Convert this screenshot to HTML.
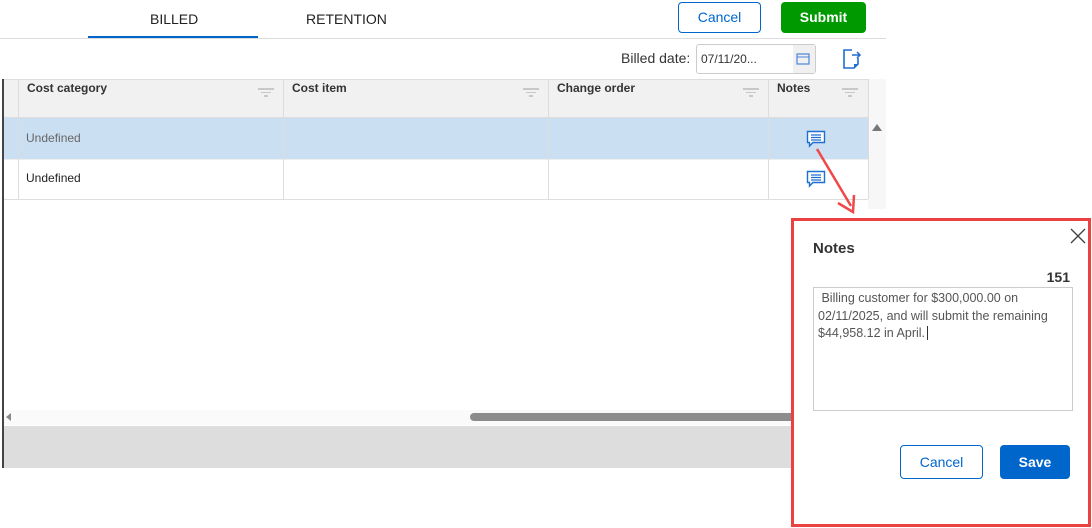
<!DOCTYPE html>
<html><head><style>
*{box-sizing:border-box;margin:0;padding:0}
body{width:1092px;height:528px;background:#fff;font-family:"Liberation Sans",Arial,sans-serif;position:relative;overflow:hidden;color:#333}
.a{position:absolute}
.btn{position:absolute;border-radius:4px;font-size:14px;text-align:center}
.th{position:absolute;top:79px;height:39px;font-size:12px;font-weight:bold;color:#333;padding:2px 8px}
.flt{position:absolute;top:86px;width:16px}
.flt i{display:block;height:1.5px;background:#c8c8c8;margin:2px auto}
</style></head><body>
<div class="a" style="left:150px;top:11px;font-size:14px;color:#222">BILLED</div>
<div class="a" style="left:306px;top:11px;font-size:14px;color:#222">RETENTION</div>
<div class="a" style="left:88px;top:36px;width:170px;height:2px;background:#0066cc"></div>
<div class="a" style="left:0;top:38px;width:886px;height:1px;background:#ddd"></div>
<div class="btn" style="left:678px;top:2px;width:83px;height:31px;border:1px solid #0066cc;color:#0066cc;line-height:29px">Cancel</div>
<div class="btn" style="left:781px;top:2px;width:85px;height:31px;background:#009a00;color:#fff;font-weight:bold;line-height:31px">Submit</div>
<div class="a" style="left:621px;top:50px;font-size:14px;color:#333">Billed date:</div>
<div class="a" style="left:696px;top:44px;width:120px;height:30px;border:1px solid #ccc;border-radius:3px;font-size:12px;padding:7px 4px;color:#333">07/11/20...<div class="a" style="right:0;top:0;width:22px;height:28px;background:#f0f0f0"></div>
<svg class="a" style="left:99px;top:8px" width="14" height="12"><rect x="1" y="1" width="12" height="10" fill="none" stroke="#4a86d8" stroke-width="1.2"/><line x1="1" y1="4" x2="13" y2="4" stroke="#4a86d8"/></svg></div>
<svg class="a" style="left:842px;top:48px" width="20" height="22"><path d="M10 2H2v18h10l4-4V10" fill="none" stroke="#1e6fd0" stroke-width="1.6"/><path d="M12 20l4-4h-4z" fill="#1e6fd0"/><path d="M10 7h8M15 4l3 3-3 3" fill="none" stroke="#1e6fd0" stroke-width="1.5"/></svg>
<div class="a" style="left:2px;top:79px;width:2px;height:389px;background:#444"></div>
<div class="a" style="left:4px;top:79px;width:864px;height:39px;background:#f1f1f1;border-top:1px solid #ddd;border-bottom:1px solid #ddd"></div>
<div class="a" style="left:868px;top:79px;width:18px;height:130px;background:#f7f7f7"></div>
<div class="a" style="left:4px;top:118px;width:864px;height:41px;background:#cbdff3"></div>
<div class="a" style="left:4px;top:199px;width:864px;height:1px;background:#ddd"></div>
<div class="a" style="left:4px;top:159px;width:864px;height:1px;background:#eee"></div>
<div class="a" style="left:18px;top:79px;width:1px;height:120px;background:#ddd"></div>
<div class="a" style="left:283px;top:79px;width:1px;height:120px;background:#ddd"></div>
<div class="a" style="left:548px;top:79px;width:1px;height:120px;background:#ddd"></div>
<div class="a" style="left:768px;top:79px;width:1px;height:120px;background:#ddd"></div>
<div class="a" style="left:868px;top:79px;width:1px;height:120px;background:#ddd"></div>
<div class="th" style="left:19px">Cost category</div>
<div class="th" style="left:284px">Cost item</div>
<div class="th" style="left:549px">Change order</div>
<div class="th" style="left:769px">Notes</div>
<div class="flt" style="left:258px"><i style="width:16px"></i><i style="width:10px"></i><i style="width:4px"></i></div>
<div class="flt" style="left:523px"><i style="width:16px"></i><i style="width:10px"></i><i style="width:4px"></i></div>
<div class="flt" style="left:743px"><i style="width:16px"></i><i style="width:10px"></i><i style="width:4px"></i></div>
<div class="flt" style="left:842px"><i style="width:16px"></i><i style="width:10px"></i><i style="width:4px"></i></div>
<div class="a" style="left:26px;top:131px;font-size:12px;color:#666">Undefined</div>
<div class="a" style="left:26px;top:171px;font-size:12px;color:#222">Undefined</div>
<svg class="a" style="left:806px;top:130px" width="20" height="19"><path d="M1.5 1.5h17v11H7l-3.5 3.5v-3.5h-2z" fill="#fff" stroke="#1e6fd0" stroke-width="1.4"/><path d="M5 5h10M5 7.5h10M5 10h10" stroke="#1e6fd0" stroke-width="1.2"/></svg>
<svg class="a" style="left:806px;top:170px" width="20" height="19"><path d="M1.5 1.5h17v11H7l-3.5 3.5v-3.5h-2z" fill="#fff" stroke="#1e6fd0" stroke-width="1.4"/><path d="M5 5h10M5 7.5h10M5 10h10" stroke="#1e6fd0" stroke-width="1.2"/></svg>
<div class="a" style="left:872px;top:124px;width:0;height:0;border-left:5px solid transparent;border-right:5px solid transparent;border-bottom:7px solid #777"></div>
<div class="a" style="left:4px;top:410px;width:790px;height:15px;background:#fafafa"></div>
<div class="a" style="left:6px;top:413px;width:0;height:0;border-top:4px solid transparent;border-bottom:4px solid transparent;border-right:5px solid #888"></div>
<div class="a" style="left:470px;top:413px;width:330px;height:8px;background:#8c8c8c;border-radius:4px"></div>
<div class="a" style="left:4px;top:426px;width:790px;height:42px;background:#dddddd"></div>
<svg class="a" style="left:0;top:0" width="1092" height="528"><line x1="817" y1="149" x2="851" y2="206" stroke="#f04848" stroke-width="2.5"/><path d="M838 203l15 9 1-17" fill="none" stroke="#f04848" stroke-width="2.5"/></svg>
<div class="a" style="left:791px;top:218px;width:300px;height:309px;border:3px solid #ec4141;background:#fff"></div>
<div class="a" style="left:813px;top:240px;font-size:15px;font-weight:bold;color:#333">Notes</div>
<svg class="a" style="left:1070px;top:228px" width="16" height="16"><path d="M1 1l14 14M15 1L1 15" stroke="#444" stroke-width="1.4"/></svg>
<div class="a" style="left:1040px;top:269px;width:30px;text-align:right;font-size:14px;font-weight:bold;color:#333">151</div>
<div class="a" style="left:813px;top:287px;width:260px;height:124px;border:1px solid #ccc;font-size:12.5px;line-height:17.5px;color:#555;padding:2px 4px">&nbsp;Billing customer for $300,000.00 on 02/11/2025, and will submit the remaining $44,958.12 in April.<span style="border-left:1px solid #333;margin-left:2px"></span></div>
<div class="btn" style="left:900px;top:445px;width:83px;height:34px;border:1px solid #0066cc;color:#0066cc;line-height:32px">Cancel</div>
<div class="btn" style="left:1000px;top:445px;width:70px;height:34px;background:#0066cc;color:#fff;font-weight:bold;line-height:34px">Save</div>
</body></html>
